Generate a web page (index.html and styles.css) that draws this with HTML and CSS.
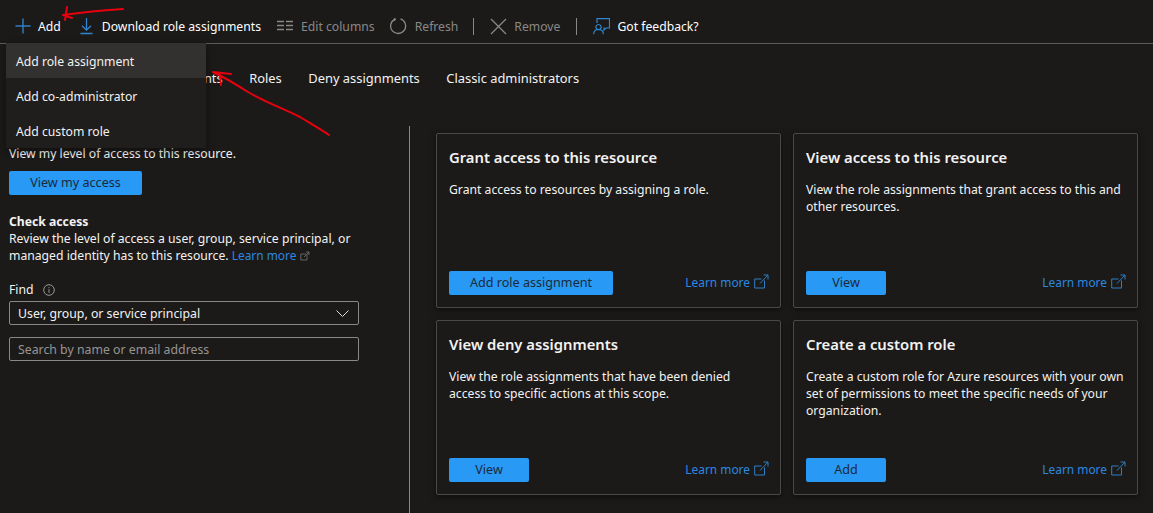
FILE: index.html
```html
<!DOCTYPE html>
<html lang="en">
<head>
<meta charset="utf-8">
<title>Access control</title>
<link rel="stylesheet" href="styles.css">
</head>
<body>
<div class="page">
  <header class="toolbar">
    <span class="tool tool-add"><svg class="ico" width="16" height="16" viewBox="0 0 16 16"><path d="M8 .5v15M.5 8h15" stroke="#2f7fc4" stroke-width="1.400" fill="none"/></svg>Add</span>
    <span class="tool tool-dl"><svg class="ico" width="13" height="18" viewBox="0 0 13 18"><path d="M6.500 1v12M2 8.800l4.500 4.400L11 8.800M.5 16.500h12" stroke="#2f86d0" stroke-width="1.300" fill="none"/></svg>Download role assignments</span>
    <span class="tool tool-off tool-cols"><svg class="ico" width="16" height="12" viewBox="0 0 16 12"><path d="M0 1.500h7M0 5.500h7M0 9.500h7M9 1.500h7M9 5.500h7M9 9.500h7" stroke="#8a8886" stroke-width="1.300" fill="none"/></svg>Edit columns</span>
    <span class="tool tool-off tool-refresh"><svg class="ico" width="18" height="18" viewBox="0 0 18 18"><path d="M6 2.200A7.500 7.500 0 1 0 11.500 1.900M5.500 1 6.300 2.400 4.800 3.800" stroke="#8a8886" stroke-width="1.300" fill="none"/></svg>Refresh</span>
    <span class="sep sep-first"></span>
    <span class="tool tool-off tool-remove"><svg class="ico" width="17" height="17" viewBox="0 0 17 17"><path d="M1 1l15 15M16 1 1 16" stroke="#8a8886" stroke-width="1.300" fill="none"/></svg>Remove</span>
    <span class="sep sep-second"></span>
    <span class="tool tool-fb"><svg class="ico" width="17" height="17" viewBox="0 0 17 17"><path d="M4 5V.7h12.500V10h-3.500l-2 2V9.500M5.500 6.500a2.600 2.600 0 1 0 .01 0M.7 16.300c0-3 2-4.800 4.800-4.800s4.800 1.800 4.800 4.800" stroke="#2f86d0" stroke-width="1.200" fill="none"/></svg>Got feedback?</span>
  </header>

  <nav class="tabs">
    <span class="tab">Role assignments</span>
    <span class="tab">Roles</span>
    <span class="tab">Deny assignments</span>
    <span class="tab">Classic administrators</span>
  </nav>

  <main class="main">
    <section class="side">
      <p class="side-text">View my level of access to this resource.</p>
      <button class="btn btn-my">View my access</button>
      <h2 class="side-head">Check access</h2>
      <p class="side-text">Review the level of access a user, group, service principal, or managed identity has to this resource. <a class="link">Learn more</a> <svg class="ext-small" width="10" height="10" viewBox="0 0 10 10"><path d="M7 3.500V9H.8V3h5M4 6l5-5M6 1h3v3" stroke="#777" stroke-width=".8" fill="none"/></svg></p>
      <div class="find-label">Find <svg class="info" width="12" height="12" viewBox="0 0 12 12"><circle cx="6" cy="6" r="5.300" stroke="#999" fill="none"/><path d="M6 5.200v3.600M6 3.200v1" stroke="#999" fill="none"/></svg></div>
      <div class="field field-select"><span>User, group, or service principal</span><svg width="13" height="7" viewBox="0 0 13 7"><path d="M.5.500l6 6 6-6" stroke="#ddd" fill="none"/></svg></div>
      <div class="field field-ph">Search by name or email address</div>
    </section>

    <section class="cards">
      <article class="card">
        <h3 class="card-title">Grant access to this resource</h3>
        <p class="card-text">Grant access to resources by assigning a role.</p>
        <div class="card-foot"><button class="btn btn-wide">Add role assignment</button><a class="link learn">Learn more<svg width="15" height="15" viewBox="0 0 15 15"><path d="M10.500 6.500v7.500H.7V5h6.800M6 9.500 14 1M9.500 1H14v4.500" stroke="#2f7fc4" fill="none"/></svg></a></div>
      </article>
      <article class="card">
        <h3 class="card-title">View access to this resource</h3>
        <p class="card-text">View the role assignments that grant access to this and other resources.</p>
        <div class="card-foot"><button class="btn">View</button><a class="link learn">Learn more<svg width="15" height="15" viewBox="0 0 15 15"><path d="M10.500 6.500v7.500H.7V5h6.800M6 9.500 14 1M9.500 1H14v4.500" stroke="#2f7fc4" fill="none"/></svg></a></div>
      </article>
      <article class="card">
        <h3 class="card-title">View deny assignments</h3>
        <p class="card-text">View the role assignments that have been denied access to specific actions at this scope.</p>
        <div class="card-foot"><button class="btn">View</button><a class="link learn">Learn more<svg width="15" height="15" viewBox="0 0 15 15"><path d="M10.500 6.500v7.500H.7V5h6.800M6 9.500 14 1M9.500 1H14v4.500" stroke="#2f7fc4" fill="none"/></svg></a></div>
      </article>
      <article class="card">
        <h3 class="card-title">Create a custom role</h3>
        <p class="card-text">Create a custom role for Azure resources with your own set of permissions to meet the specific needs of your organization.</p>
        <div class="card-foot"><button class="btn">Add</button><a class="link learn">Learn more<svg width="15" height="15" viewBox="0 0 15 15"><path d="M10.500 6.500v7.500H.7V5h6.800M6 9.500 14 1M9.500 1H14v4.500" stroke="#2f7fc4" fill="none"/></svg></a></div>
      </article>
    </section>
  </main>

  <div class="menu">
    <div class="menu-item menu-item-on">Add role assignment</div>
    <div class="menu-item">Add co-administrator</div>
    <div class="menu-item">Add custom role</div>
  </div>

  <svg class="scribble" width="1153" height="513" viewBox="0 0 1153 513">
    <path d="M123 9C105 10 85 12 63 15M67 7 65 20M63 15 72 18" stroke="#e8000d" stroke-width="2" fill="none" stroke-linecap="round"/>
    <path d="M329 135C320 129 308 122 300 117 282 108 265 102 248 92 237 85 226 78 213 72M213 72 231 74M220 75 221 85" stroke="#e8000d" stroke-width="2" fill="none" stroke-linecap="round"/>
  </svg>
</div>
</body>
</html>
```
FILE: styles.css
```css
* { box-sizing: border-box; }
html, body { margin: 0; height: 100%; background: #1b1a19; }
body {
  font-family: "Noto Sans", "Liberation Sans", sans-serif;
  font-size: 12.2px;
  color: #f3f2f1;
  overflow: hidden;
}
.page { position: relative; width: 1153px; height: 513px; display: flex; flex-direction: column; }
.toolbar {
  height: 44px;
  flex: none;
  display: flex;
  align-items: center;
  padding: 9px 0 0 15px;
  border-bottom: 1px solid #5c5b5a;
  white-space: nowrap;
}
.tool { display: inline-flex; align-items: center; color: #fff; }
.ico { flex: none; }
.tool-add .ico { margin-right: 7px; }
.tool-dl { margin-left: 19px; }
.tool-dl .ico { margin-right: 9px; }
.tool-cols { margin-left: 16px; }
.tool-cols .ico { margin-right: 8px; }
.tool-refresh { margin-left: 14px; }
.tool-refresh .ico { margin-right: 8px; }
.tool-remove { margin-left: 16px; }
.tool-remove .ico { margin-right: 7px; }
.tool-fb { margin-left: 16px; }
.tool-fb .ico { margin-right: 7px; }
.tool-off { color: #8a8886; }
.sep { width: 1px; height: 17px; background: #8a8886; }
.sep-first { margin-left: 15px; }
.sep-second { margin-left: 16px; }

.tabs {
  flex: none;
  height: 82px;
  display: flex;
  gap: 26.5px;
  padding: 25px 0 0 116px;
  font-size: 12.9px;
  white-space: nowrap;
}
.tab { line-height: 18px; }

.main { flex: 1; display: flex; min-height: 0; }
.side {
  width: 410px;
  flex: none;
  border-right: 1px solid #8a8886;
  padding: 19px 50px 0 9px;
}
.side-head { margin: 0; font-size: 12.2px; font-weight: 700; line-height: 17px; }
.side-text { margin: 0; line-height: 17px; width: 350px; }
.btn {
  display: block;
  width: 80px;
  height: 24px;
  padding: 0 0 1px;
  border: 0;
  border-radius: 2px;
  background: #2899f5;
  color: #1b2a38;
  font: inherit;
  font-size: 12.6px;
}
.btn-my { width: 133px; margin: 9px 0 18px; }
.btn-wide { width: 164px; }
.link { color: #2b88e0; font-size: 11.9px; }
.ext-small { vertical-align: -1px; }
.find-label { margin-top: 17px; line-height: 17px; display: flex; align-items: center; gap: 9px; }
.field {
  width: 350px;
  height: 24px;
  margin-top: 3px;
  padding: 0 9px 0 8px;
  border: 1px solid #8a8886;
  border-radius: 2px;
  display: flex;
  align-items: center;
  justify-content: space-between;
  font-size: 12.3px;
}
.field-ph { margin-top: 12px; color: #979593; }

.cards {
  flex: 1;
  display: grid;
  grid-template-columns: 345px 345px;
  grid-template-rows: 175px 175px;
  gap: 12px;
  padding: 7px 0 0 26px;
  align-content: start;
}
.card {
  border: 1px solid #4a4948;
  border-radius: 2px;
  box-shadow: 0 2px 6px rgba(0,0,0,.5);
  padding: 13px 12px 12px;
  display: flex;
  flex-direction: column;
}
.card-title { margin: 0; font-size: 14.8px; font-weight: 600; line-height: 20px; }
.card-text { margin: 14px 0 0; line-height: 17px; }
.card-foot { margin-top: auto; display: flex; justify-content: space-between; align-items: center; }
.learn { display: inline-flex; align-items: center; gap: 4px; padding-bottom: 3px; margin-right: -1px; }

.menu {
  position: absolute;
  left: 6px;
  top: 43px;
  width: 200px;
  height: 105px;
  background: #1f1e1d;
  box-shadow: 0 3px 8px rgba(0,0,0,.4);
}
.menu-item { height: 35px; line-height: 37px; padding-left: 10px; }
.menu-item-on { background: #323130; }
.scribble { position: absolute; left: 0; top: 0; pointer-events: none; }
```
